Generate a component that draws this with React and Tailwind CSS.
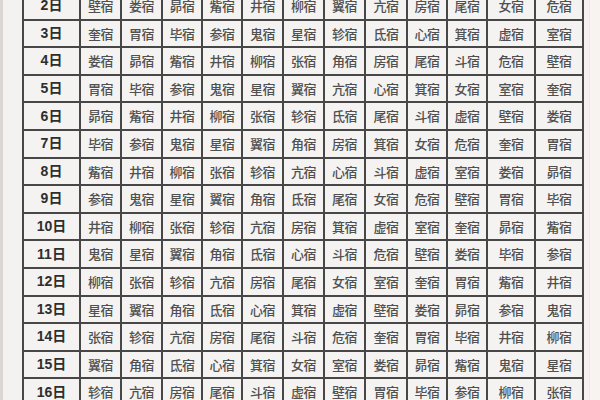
import React from "react";

// 27 宿 cycle (牛宿 omitted)
const cycle = [
    "角", "亢", "氐", "房", "心", "尾", "箕", "斗", "女", "虚", "危", "室", "壁", "奎",
    "娄", "胃", "昴", "毕", "觜", "参", "井", "鬼", "柳", "星", "张", "翼", "轸",
];

// index of the 宿 on day 1 of each month
const starts = [11, 13, 15, 17, 19, 21, 24, 0, 2, 4, 7, 9];

const colWidths = [
    "w-[57px]", "w-[41px]", "w-[41px]", "w-[40px]", "w-[40px]", "w-[41px]", "w-[41px]",
    "w-[41px]", "w-[42px]", "w-[40px]", "w-[40px]", "w-[48px]", "w-[48px]",
];

const days = Array.from({ length: 15 }, (_, i) => i + 2);

const App = () => {
    return (
        <div
            className="flex w-[600px] h-[400px] overflow-hidden bg-[#f3f1f0]"
            style={{ fontFamily: '"Noto Sans CJK SC", "Liberation Sans", sans-serif' }}
        >
            <div className="w-[3px] shrink-0 bg-[#d9d6d4]" />
            <div className="w-[19px] shrink-0 bg-[#f4f2f1]" />

            <div className="shrink-0 mt-[-9px] border-l-2 border-t-2 border-[#474747] self-start">
                {days.map((day) => (
                    <div key={day} className="flex h-[27.6px]">
                        {colWidths.map((w, c) => {
                            const isDay = c === 0;
                            const text = isDay
                                ? `${day}日`
                                : `${cycle[(starts[c - 1] + day - 1) % 27]}宿`;
                            return (
                                <div
                                    key={c}
                                    className={`${w} shrink-0 flex items-center justify-center border-r-2 border-b-2 border-[#474747] bg-[#f4f3f1] ${isDay
                                        ? "text-[14px] font-bold text-[#2e2e2e]"
                                        : "text-[13px] font-medium text-[#505050] tracking-[-0.5px]"
                                        }`}
                                    style={isDay ? { fontFamily: '"Liberation Sans", "Noto Sans CJK SC", sans-serif' } : undefined}
                                >
                                    {text}
                                </div>
                            );
                        })}
                    </div>
                ))}
            </div>

            <div className="w-[5px] shrink-0 bg-[#f6f1f0]" />
            <div className="flex-1 bg-[#f8f2f1] border-l border-[#efe8e7]" />
        </div>
    );
};

export default App;
